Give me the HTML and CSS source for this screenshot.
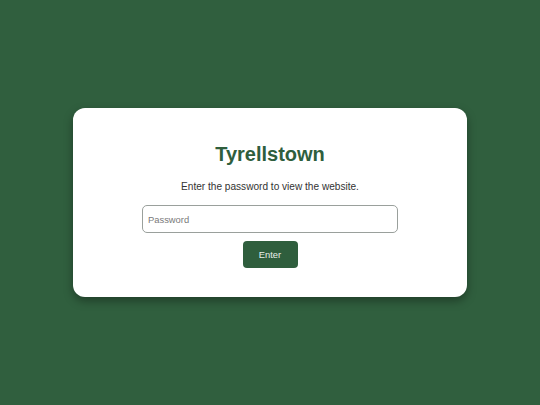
FILE: index.html
```html
<!DOCTYPE html>
<html lang="en">
<head>
<meta charset="utf-8">
<title>Tyrellstown</title>
<link rel="stylesheet" href="styles.css">
</head>
<body>
  <main class="gate">
    <form class="gate-card" onsubmit="return false;">
      <h1 class="gate-title">Tyrellstown</h1>
      <p class="gate-text">Enter the password to view the website.</p>
      <input class="gate-input" type="password" placeholder="Password">
      <button class="gate-button" type="submit">Enter</button>
    </form>
  </main>
</body>
</html>
```

FILE: styles.css
```css
html, body {
  margin: 0;
  height: 100%;
}

body {
  background: #305f3e;
  font-family: "Liberation Sans", Arial, sans-serif;
}

.gate {
  height: 100%;
  display: flex;
  align-items: center;
  justify-content: center;
}

.gate-card {
  box-sizing: border-box;
  width: 394px;
  height: 189px;
  padding: 35px 0 29px;
  background: #ffffff;
  border-radius: 12px;
  box-shadow: 0 4px 10px rgba(0, 0, 0, 0.35);
  display: flex;
  flex-direction: column;
  align-items: center;
}

.gate-title {
  margin: 0;
  font-size: 20px;
  line-height: 23px;
  font-weight: bold;
  color: #2f5e3d;
}

.gate-text {
  margin: 15px 0 0;
  font-size: 10.1px;
  line-height: 12px;
  color: #333333;
}

.gate-input {
  box-sizing: border-box;
  margin-top: 12px;
  width: 256px;
  height: 28px;
  padding: 0 5px;
  border: 1px solid #9aa09c;
  border-radius: 5px;
  font-family: inherit;
  font-size: 9.4px;
  color: #333333;
  outline: none;
}

.gate-input::placeholder {
  color: #7a7a7a;
}

.gate-button {
  box-sizing: border-box;
  margin-top: 8px;
  width: 55px;
  height: 27px;
  border: none;
  border-radius: 4px;
  background: #2f5e3d;
  color: #e8eee9;
  font-family: inherit;
  font-size: 9.4px;
  cursor: pointer;
}
```
